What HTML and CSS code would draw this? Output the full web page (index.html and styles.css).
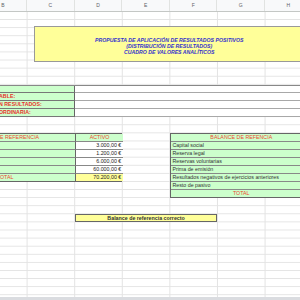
FILE: index.html
```html
<!DOCTYPE html>
<html lang="es">
<head>
<meta charset="utf-8">
<title>Propuesta de aplicación de resultados</title>
<link rel="stylesheet" href="styles.css">
</head>
<body>
<div class="page">
  <div class="colhead">
    <span>B</span><span>C</span><span>D</span><span>E</span><span>F</span><span>G</span><span>H</span>
  </div>
  <div class="sheet">
    <div class="title">
      <p>PROPUESTA DE APLICACIÓN DE RESULTADOS POSITIVOS</p>
      <p>(DISTRIBUCIÓN DE RESULTADOS)</p>
      <p>CUADRO DE VALORES ANALÍTICOS</p>
    </div>

    <div class="params">
      <div class="plabel"></div><div class="pval"></div>
      <div class="plabel">ABLE:</div><div class="pval"></div>
      <div class="plabel">N RESULTADOS:</div><div class="pval"></div>
      <div class="plabel">ORDINARIA:</div><div class="pval"></div>
    </div>

    <div class="activo">
      <div class="lab red">E REFERENCIA</div><div class="num head red">ACTIVO</div>
      <div class="lab"></div><div class="num">3.000,00 €</div>
      <div class="lab"></div><div class="num">1.200,00 €</div>
      <div class="lab"></div><div class="num">6.000,00 €</div>
      <div class="lab"></div><div class="num">60.000,00 €</div>
      <div class="lab red">OTAL</div><div class="num total">70.200,00 €</div>
    </div>

    <div class="pasivo">
      <div class="item head red">BALANCE DE REFENCIA</div>
      <div class="item">Capital social</div>
      <div class="item">Reserva legal</div>
      <div class="item">Reservas voluntarias</div>
      <div class="item">Prima de emisión</div>
      <div class="item">Resultados negativos de ejercicios anteriores</div>
      <div class="item">Resto de pasivo</div>
      <div class="item head red last">TOTAL</div>
    </div>

    <div class="check">Balance de referencia correcto</div>
  </div>
  <div class="statusbar"></div>
</div>
</body>
</html>
```

FILE: styles.css
```css
* { box-sizing: border-box; }
html, body { margin: 0; padding: 0; background: #fff; }
p { margin: 0; }

.page {
  width: 300px;
  height: 300px;
  overflow: hidden;
  display: flex;
  flex-direction: column;
  font-family: "Liberation Sans", Arial, sans-serif;
  background: #fff;
}

.colhead {
  flex: none;
  height: 12px;
  display: flex;
  margin-left: -20.5px;
  background: #f8f9fa;
  border-bottom: 1px solid #c4c7c5;
}
.colhead span {
  flex: none;
  width: 47.6px;
  border-right: 1px solid #e1e3e1;
  font-size: 5px;
  color: #5f6368;
  text-align: center;
  line-height: 11px;
}

.sheet {
  flex: 1;
  min-height: 0;
  overflow: hidden;
  margin-left: -20.5px;
  display: grid;
  grid-template-columns: repeat(7, 47.6px);
  grid-template-rows: repeat(36, 8.1px);
  background-image:
    linear-gradient(to right, #e3e3e3 1px, transparent 1px),
    linear-gradient(to bottom, #e3e3e3 1px, transparent 1px);
  background-size: 47.6px 8.1px;
  background-position: 46.6px 7.1px;
  font-size: 5.3px;
}

.title {
  grid-column: 2 / -1;
  grid-row: 2 / 8;
  justify-self: start;
  align-self: start;
  margin: 5.6px 0 0 7.2px;
  width: 270px;
  height: 36.6px;
  background: #ffff99;
  border: 1.5px solid #999;
  display: flex;
  flex-direction: column;
  justify-content: center;
  padding-top: 4px;
  color: #3333cc;
  font-weight: bold;
  font-style: italic;
  font-size: 5.2px;
  line-height: 6.3px;
  text-align: center;
}

.params {
  grid-column: 1 / -1;
  grid-row: 10 / 14;
  display: grid;
  grid-template-columns: 95.2px 1fr;
  grid-template-rows: repeat(4, 1fr);
  border-top: 1px solid #888;
}
.plabel {
  background: #ccffcc;
  border-bottom: 1px solid #777;
  border-right: 1px solid #666;
  color: #e8322a;
  font-weight: bold;
  padding-left: 19.5px;
  line-height: 7px;
  white-space: nowrap;
}
.pval {
  background: #fff;
  border-bottom: 1px solid #a8a8a8;
}

.red { color: #ee4a2e; }

.activo {
  grid-column: 1 / 4;
  grid-row: 16 / 22;
  display: grid;
  grid-template-columns: 95.2px 47.6px;
  grid-template-rows: repeat(6, 1fr);
  border: 1px solid #666;
}
.lab {
  background: #ccffcc;
  border-bottom: 1px solid #888;
  border-right: 1px solid #666;
  padding-left: 19.5px;
  line-height: 7px;
  white-space: nowrap;
}
.num {
  background: #fff;
  border-bottom: 1px solid #888;
  text-align: right;
  padding-right: 2px;
  line-height: 7px;
  color: #222;
  white-space: nowrap;
}
.num.head {
  background: #ccffcc;
  text-align: center;
  padding-right: 0;
  color: #ee4a2e;
}
.num.total { background: #ffff99; border-bottom: 0; }
.activo .lab:nth-last-child(2) { border-bottom: 0; }

.pasivo {
  grid-column: 5 / 8;
  grid-row: 16 / 24;
  display: grid;
  grid-template-rows: repeat(8, 1fr);
  background: #ccffcc;
  border: 1px solid #666;
}
.item {
  border-bottom: 1px solid #888;
  padding-left: 1.5px;
  line-height: 7px;
  color: #333;
  white-space: nowrap;
}
.item.head {
  text-align: center;
  padding-left: 0;
  color: #ee4a2e;
}
.item.last { border-bottom: 0; }

.check {
  grid-column: 3 / 6;
  grid-row: 26 / 27;
  background: #ffff99;
  border: 1px solid #666;
  text-align: center;
  font-weight: bold;
  color: #333;
  line-height: 6.5px;
}

.statusbar {
  flex: none;
  height: 3px;
  background: #dadce0;
}
```
